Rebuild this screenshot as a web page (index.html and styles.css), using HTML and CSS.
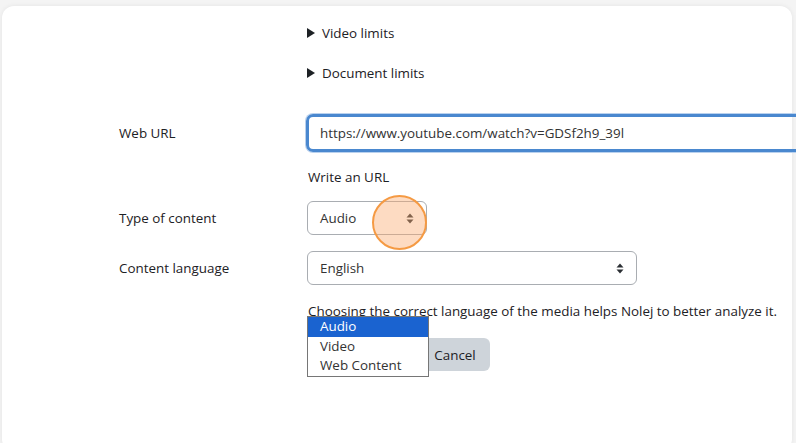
FILE: index.html
```html
<!DOCTYPE html>
<html>
<head>
<meta charset="utf-8">
<link rel="stylesheet" href="styles.css">
</head>
<body>
<div class="card">
  <div class="section">
    <div class="summary"><span class="tri"></span>Video limits</div>
    <div class="summary second"><span class="tri"></span>Document limits</div>
  </div>
  <div class="row url-row">
    <div class="label">Web URL</div>
    <div class="field"><div class="input">https://www.youtube.com/watch?v=GDSf2h9_39l</div></div>
  </div>
  <div class="help first">Write an URL</div>
  <div class="row type-row">
    <div class="label">Type of content</div>
    <div class="field">
      <div class="select small">Audio<svg class="arrows" width="8" height="11" viewBox="0 0 8 11"><path d="M4 0.5 L7.5 4.5 H0.5 Z M4 10.5 L7.5 6.5 H0.5 Z" fill="#2b2f33"/></svg>
        <span class="cursor"></span>
      </div>
    </div>
  </div>
  <div class="row lang-row">
    <div class="label">Content language</div>
    <div class="field"><div class="select wide">English<svg class="arrows" width="8" height="11" viewBox="0 0 8 11"><path d="M4 0.5 L7.5 4.5 H0.5 Z M4 10.5 L7.5 6.5 H0.5 Z" fill="#2b2f33"/></svg></div></div>
  </div>
  <div class="help note">Choosing the correct language of the media helps Nolej to better analyze it.</div>
  <div class="buttons">
    <button class="btn primary"></button>
    <button class="btn secondary">Cancel</button>
    <ul class="menu">
      <li class="sel">Audio</li>
      <li>Video</li>
      <li>Web Content</li>
    </ul>
  </div>
</div>
</body>
</html>
```
FILE: styles.css
```css
html, body { margin: 0; padding: 0; }
body {
  background: #f4f4f4;
  font-family: "Open Sans", "Noto Sans", sans-serif;
  font-size: 13.4px;
  color: #1d2125;
  width: 796px;
  height: 443px;
  overflow: hidden;
}
.card {
  position: relative;
  margin: 6px 4px 0 2px;
  height: 445px;
  background: #fff;
  border-radius: 12px;
  box-shadow: 0 0 5px rgba(0,0,0,0.07);
  padding-top: 17px;
  box-sizing: border-box;
}
.section { padding-left: 305px; }
.summary {
  display: flex;
  align-items: center;
  line-height: 20px;
  height: 20px;
}
.summary.second { margin-top: 20px; }
.tri {
  width: 0; height: 0;
  border-left: 8px solid #1d2125;
  border-top: 5px solid transparent;
  border-bottom: 5px solid transparent;
  margin-right: 7px;
}
.row {
  display: grid;
  grid-template-columns: 188px 1fr;
  align-items: center;
  padding-left: 117px;
}
.label { line-height: 20px; }
.url-row { margin-top: 31px; margin-right: -10px; }
.input {
  height: 38px;
  box-sizing: border-box;
  border: 3px solid #4a88cf;
  border-radius: 7px;
  box-shadow: 0 0 0 1px #b9d1ee;
  padding-left: 11px;
  display: flex;
  align-items: center;
  color: #333;
  margin-left: -1px;
}
.help {
  padding-left: 306px;
  line-height: 20px;
  white-space: nowrap;
}
.help.first { margin-top: 15px; }
.type-row { margin-top: 14px; }
.lang-row { margin-top: 16px; }
.select {
  position: relative;
  height: 34px;
  box-sizing: border-box;
  border: 1px solid #a9adb2;
  border-radius: 6px;
  padding-left: 12px;
  display: flex;
  align-items: center;
  color: #333;
}
.select.small { width: 120px; }
.select.wide { width: 330px; }
.arrows { position: absolute; right: 12px; top: 11px; }
.cursor {
  position: absolute;
  left: 64px;
  top: -7px;
  width: 51px;
  height: 51px;
  border-radius: 50%;
  background: rgba(250, 170, 110, 0.42);
  border: 2px solid #f59a43;
}
.help.note { margin-top: 16px; }
.buttons {
  position: relative;
  margin-top: 17px;
  padding-left: 306px;
  display: flex;
  gap: 6px;
}
.btn {
  height: 33px;
  border: none;
  border-radius: 6px;
  font-family: inherit;
  font-size: 13.4px;
  padding: 0 12px;
}
.primary { background: #0f6cbf; color: #fff; width: 106px; }
.secondary { background: #ced4da; color: #1d2125; width: 70px; }
.menu {
  position: absolute;
  left: 305px;
  top: -22px;
  width: 120px;
  margin: 0;
  padding: 0;
  list-style: none;
  background: #fff;
  border: 1px solid #767676;
  font-size: 13.4px;
  color: #333;
}
.menu li {
  height: 19.5px;
  line-height: 19px;
  padding-left: 12px;
}
.menu li.sel { background: #1a63d0; color: #fff; }
```
